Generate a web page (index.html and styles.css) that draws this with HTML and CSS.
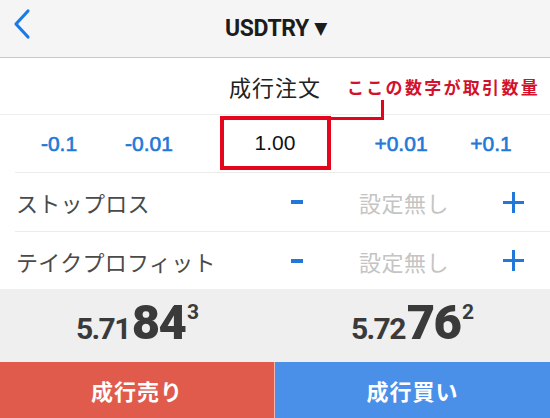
FILE: index.html
```html
<!DOCTYPE html>
<html lang="ja">
<head>
    <meta charset="UTF-8">
    <meta name="viewport" content="width=device-width, initial-scale=1.0">
    <title>USDTRY 成行注文</title>
    <link rel="stylesheet" href="styles.css">
</head>
<body>
    <header class="topbar">
        <svg class="back" width="20" height="32" viewBox="0 0 20 32">
            <path d="M16 3 L4 16 L16 29" fill="none" stroke="#1a7be8" stroke-width="3.2" stroke-linecap="round" stroke-linejoin="round"/>
        </svg>
        <h1 class="symbol">USDTRY <span class="caret">▼</span></h1>
    </header>

    <div class="order-type">
        <span>成行注文</span>
        <span class="note">ここの数字が取引数量</span>
        <div class="note-line"></div>
    </div>

    <div class="volume">
        <button class="step">-0.1</button>
        <button class="step">-0.01</button>
        <div class="qty"><span>1.00</span></div>
        <button class="step">+0.01</button>
        <button class="step">+0.1</button>
    </div>

    <div class="level">
        <span class="label">ストップロス</span>
        <span class="minus"></span>
        <span class="unset">設定無し</span>
        <span class="plus"></span>
    </div>
    <div class="level last">
        <span class="label">テイクプロフィット</span>
        <span class="minus"></span>
        <span class="unset">設定無し</span>
        <span class="plus"></span>
    </div>

    <div class="prices">
        <div class="price"><span class="lead">5.71</span><b>84</b><sup>3</sup></div>
        <div class="price"><span class="lead">5.72</span><b>76</b><sup>2</sup></div>
    </div>

    <div class="actions">
        <button class="sell">成行売り</button>
        <button class="buy">成行買い</button>
    </div>
</body>
</html>
```
FILE: styles.css
```css
body {
    margin: 0;
    width: 550px;
    height: 418px;
    overflow: hidden;
    background: #fff;
    font-family: "Noto Sans CJK JP", "Liberation Sans", sans-serif;
    color: #333;
}
.topbar {
    height: 57px;
    background: #f5f5f5;
    border-bottom: 1px solid #c9c9c9;
    display: flex;
    align-items: center;
    justify-content: center;
    position: relative;
}
.back {
    position: absolute;
    left: 12px;
    top: 8px;
}
.symbol {
    margin: 0 0 0 2px;
    font-family: "Roboto", sans-serif;
    font-weight: bold;
    font-size: 23px;
    color: #1c1c1c;
    letter-spacing: -0.4px;
}
.caret {
    font-size: 17px;
    font-family: "DejaVu Sans", sans-serif;
    vertical-align: 2px;
}
.order-type {
    height: 56px;
    border-bottom: 1px solid #efefef;
    display: flex;
    align-items: center;
    justify-content: center;
    position: relative;
    font-size: 22px;
    color: #222;
    letter-spacing: 1px;
}
.note {
    position: absolute;
    left: 347px;
    top: 16px;
    font-size: 17px;
    font-weight: bold;
    color: #d3112b;
    letter-spacing: 2.3px;
}
.note-line {
    position: absolute;
    left: 328px;
    top: 42px;
    width: 53px;
    height: 17px;
    border-right: 3px solid #e3061b;
    border-bottom: 3px solid #e3061b;
}
.volume {
    height: 58px;
    display: grid;
    grid-template-columns: 118px 62px 1fr 62px 118px;
    align-items: center;
    position: relative;
}
.volume::after {
    content: "";
    position: absolute;
    left: 15px;
    right: 0;
    bottom: 0;
    border-bottom: 1px solid #ececec;
}
.step {
    border: none;
    background: none;
    padding: 0;
    font-family: "Liberation Sans", sans-serif;
    font-size: 21px;
    color: #2278d8;
    text-align: center;
    -webkit-text-stroke: 0.6px #2278d8;
}
.qty {
    justify-self: center;
    width: 103px;
    height: 46px;
    border: 4px solid #e4061c;
    display: flex;
    align-items: center;
    justify-content: center;
    font-family: "Liberation Sans", sans-serif;
    font-size: 21px;
    color: #111;
    margin-top: -3px;
}
.level {
    height: 58px;
    margin-left: 15px;
    padding-right: 10px;
    border-bottom: 1px solid #ececec;
    display: grid;
    grid-template-columns: 1fr 50px 164px 54px;
    align-items: center;
}
.level.last {
    border-bottom: none;
    height: 57px;
}
.label {
    font-size: 22px;
    color: #4a4a4a;
    letter-spacing: 0.3px;
    padding-left: 1px;
}
.minus {
    justify-self: center;
    width: 12px;
    height: 4px;
    background: #2278d8;
}
.unset {
    text-align: center;
    font-size: 22px;
    color: #c4c4c4;
    letter-spacing: 0.5px;
}
.plus {
    justify-self: center;
    width: 21px;
    height: 21px;
    background:
        linear-gradient(#2278d8, #2278d8) center / 21px 3px no-repeat,
        linear-gradient(#2278d8, #2278d8) center / 3px 21px no-repeat;
}
.prices {
    height: 73px;
    background: #efefef;
    display: grid;
    grid-template-columns: 1fr 1fr;
    align-items: center;
    color: #3a3a3a;
}
.price {
    text-align: center;
    font-family: "Roboto", sans-serif;
    font-weight: bold;
    font-size: 30px;
    padding-bottom: 6px;
}
.price .lead {
    letter-spacing: -1.6px;
    margin-right: 2px;
}
.price b {
    font-size: 49px;
    letter-spacing: -1.8px;
}
.price sup {
    font-size: 21px;
    vertical-align: 20px;
    margin-left: 2px;
}
.actions {
    height: 56px;
    display: grid;
    grid-template-columns: 274px 1fr;
}
.actions button {
    border: none;
    font-family: "Noto Sans CJK JP", sans-serif;
    font-size: 22px;
    font-weight: bold;
    color: #fff;
    letter-spacing: 1px;
}
.sell {
    background: #e05b4c;
}
.buy {
    background: #4a8fe8;
    border-left: 1px solid #f3b7ae !important;
}
```
